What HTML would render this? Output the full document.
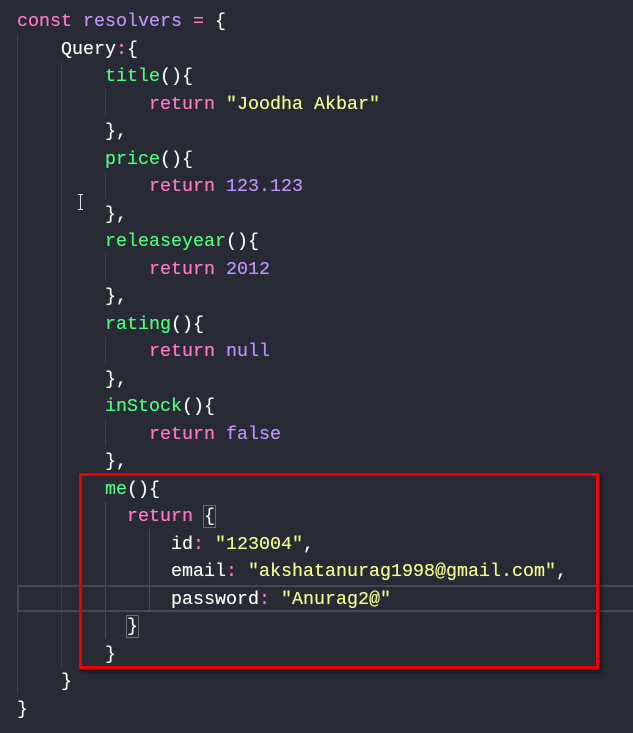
<!DOCTYPE html>
<html><head><meta charset="utf-8"><style>
html,body{margin:0;padding:0;background:#282a36;width:633px;height:733px;overflow:hidden;position:relative}
.code{position:absolute;left:17px;top:8px;font-family:"Liberation Mono",monospace;font-size:18.33px;line-height:27.52px;color:#f8f8f2;white-space:pre;z-index:2;text-shadow:0 0 0.4px currentColor}
.k{color:#ff79c6}.v{color:#bd93f9}.f{color:#50fa7b}.s{color:#f1fa8c}.n{color:#bd93f9}
.g{position:absolute;width:1px;background:#3c3e4c;z-index:1}
.cur{position:absolute;left:17px;right:-5px;top:585px;height:23px;border:2px solid #44475a;z-index:1}
.red{position:absolute;left:79px;top:473px;width:514px;height:190px;border:3px solid #e00;box-shadow:3px 3px 4px rgba(0,0,0,.5);z-index:3}
.br{outline:1px solid #6b6f6f}
</style></head><body>
<div class="g" style="left:17px;top:34px;height:660px"></div>
<div class="g" style="left:61px;top:62px;height:605px"></div>
<div class="g" style="left:105px;top:89px;height:27px"></div>
<div class="g" style="left:105px;top:172px;height:27px"></div>
<div class="g" style="left:105px;top:254px;height:27px"></div>
<div class="g" style="left:105px;top:337px;height:27px"></div>
<div class="g" style="left:105px;top:419px;height:27px"></div>
<div class="g" style="left:105px;top:502px;height:137px;background:#4a4c5a"></div>
<div class="g" style="left:149px;top:529px;height:83px;background:#4a4c5a"></div>
<div class="cur"></div>
<div class="red"></div>
<div style="position:absolute;left:78px;top:194px;width:5px;height:14px;border-top:1px solid #ddd;border-bottom:1px solid #ddd;z-index:2"><div style="position:absolute;left:2px;top:0;width:1px;height:14px;background:#ddd"></div></div>
<div class="code"><span class="k">const</span> <span class="v">resolvers</span> <span class="k">=</span> {
    Query<span class="k">:</span>{
        <span class="f">title</span>(){
            <span class="k">return</span> <span class="s">"Joodha Akbar"</span>
        },
        <span class="f">price</span>(){
            <span class="k">return</span> <span class="n">123.123</span>
        },
        <span class="f">releaseyear</span>(){
            <span class="k">return</span> <span class="n">2012</span>
        },
        <span class="f">rating</span>(){
            <span class="k">return</span> <span class="n">null</span>
        },
        <span class="f">inStock</span>(){
            <span class="k">return</span> <span class="n">false</span>
        },
        <span class="f">me</span>(){
          <span class="k">return</span> <span class="br">{</span>
              id<span class="k">:</span> <span class="s">"123004"</span>,
              email<span class="k">:</span> <span class="s">"akshatanurag1998@gmail.com"</span>,
              password<span class="k">:</span> <span class="s">"Anurag2@"</span>
          <span class="br">}</span>
        }
    }
}</div>
</body></html>
